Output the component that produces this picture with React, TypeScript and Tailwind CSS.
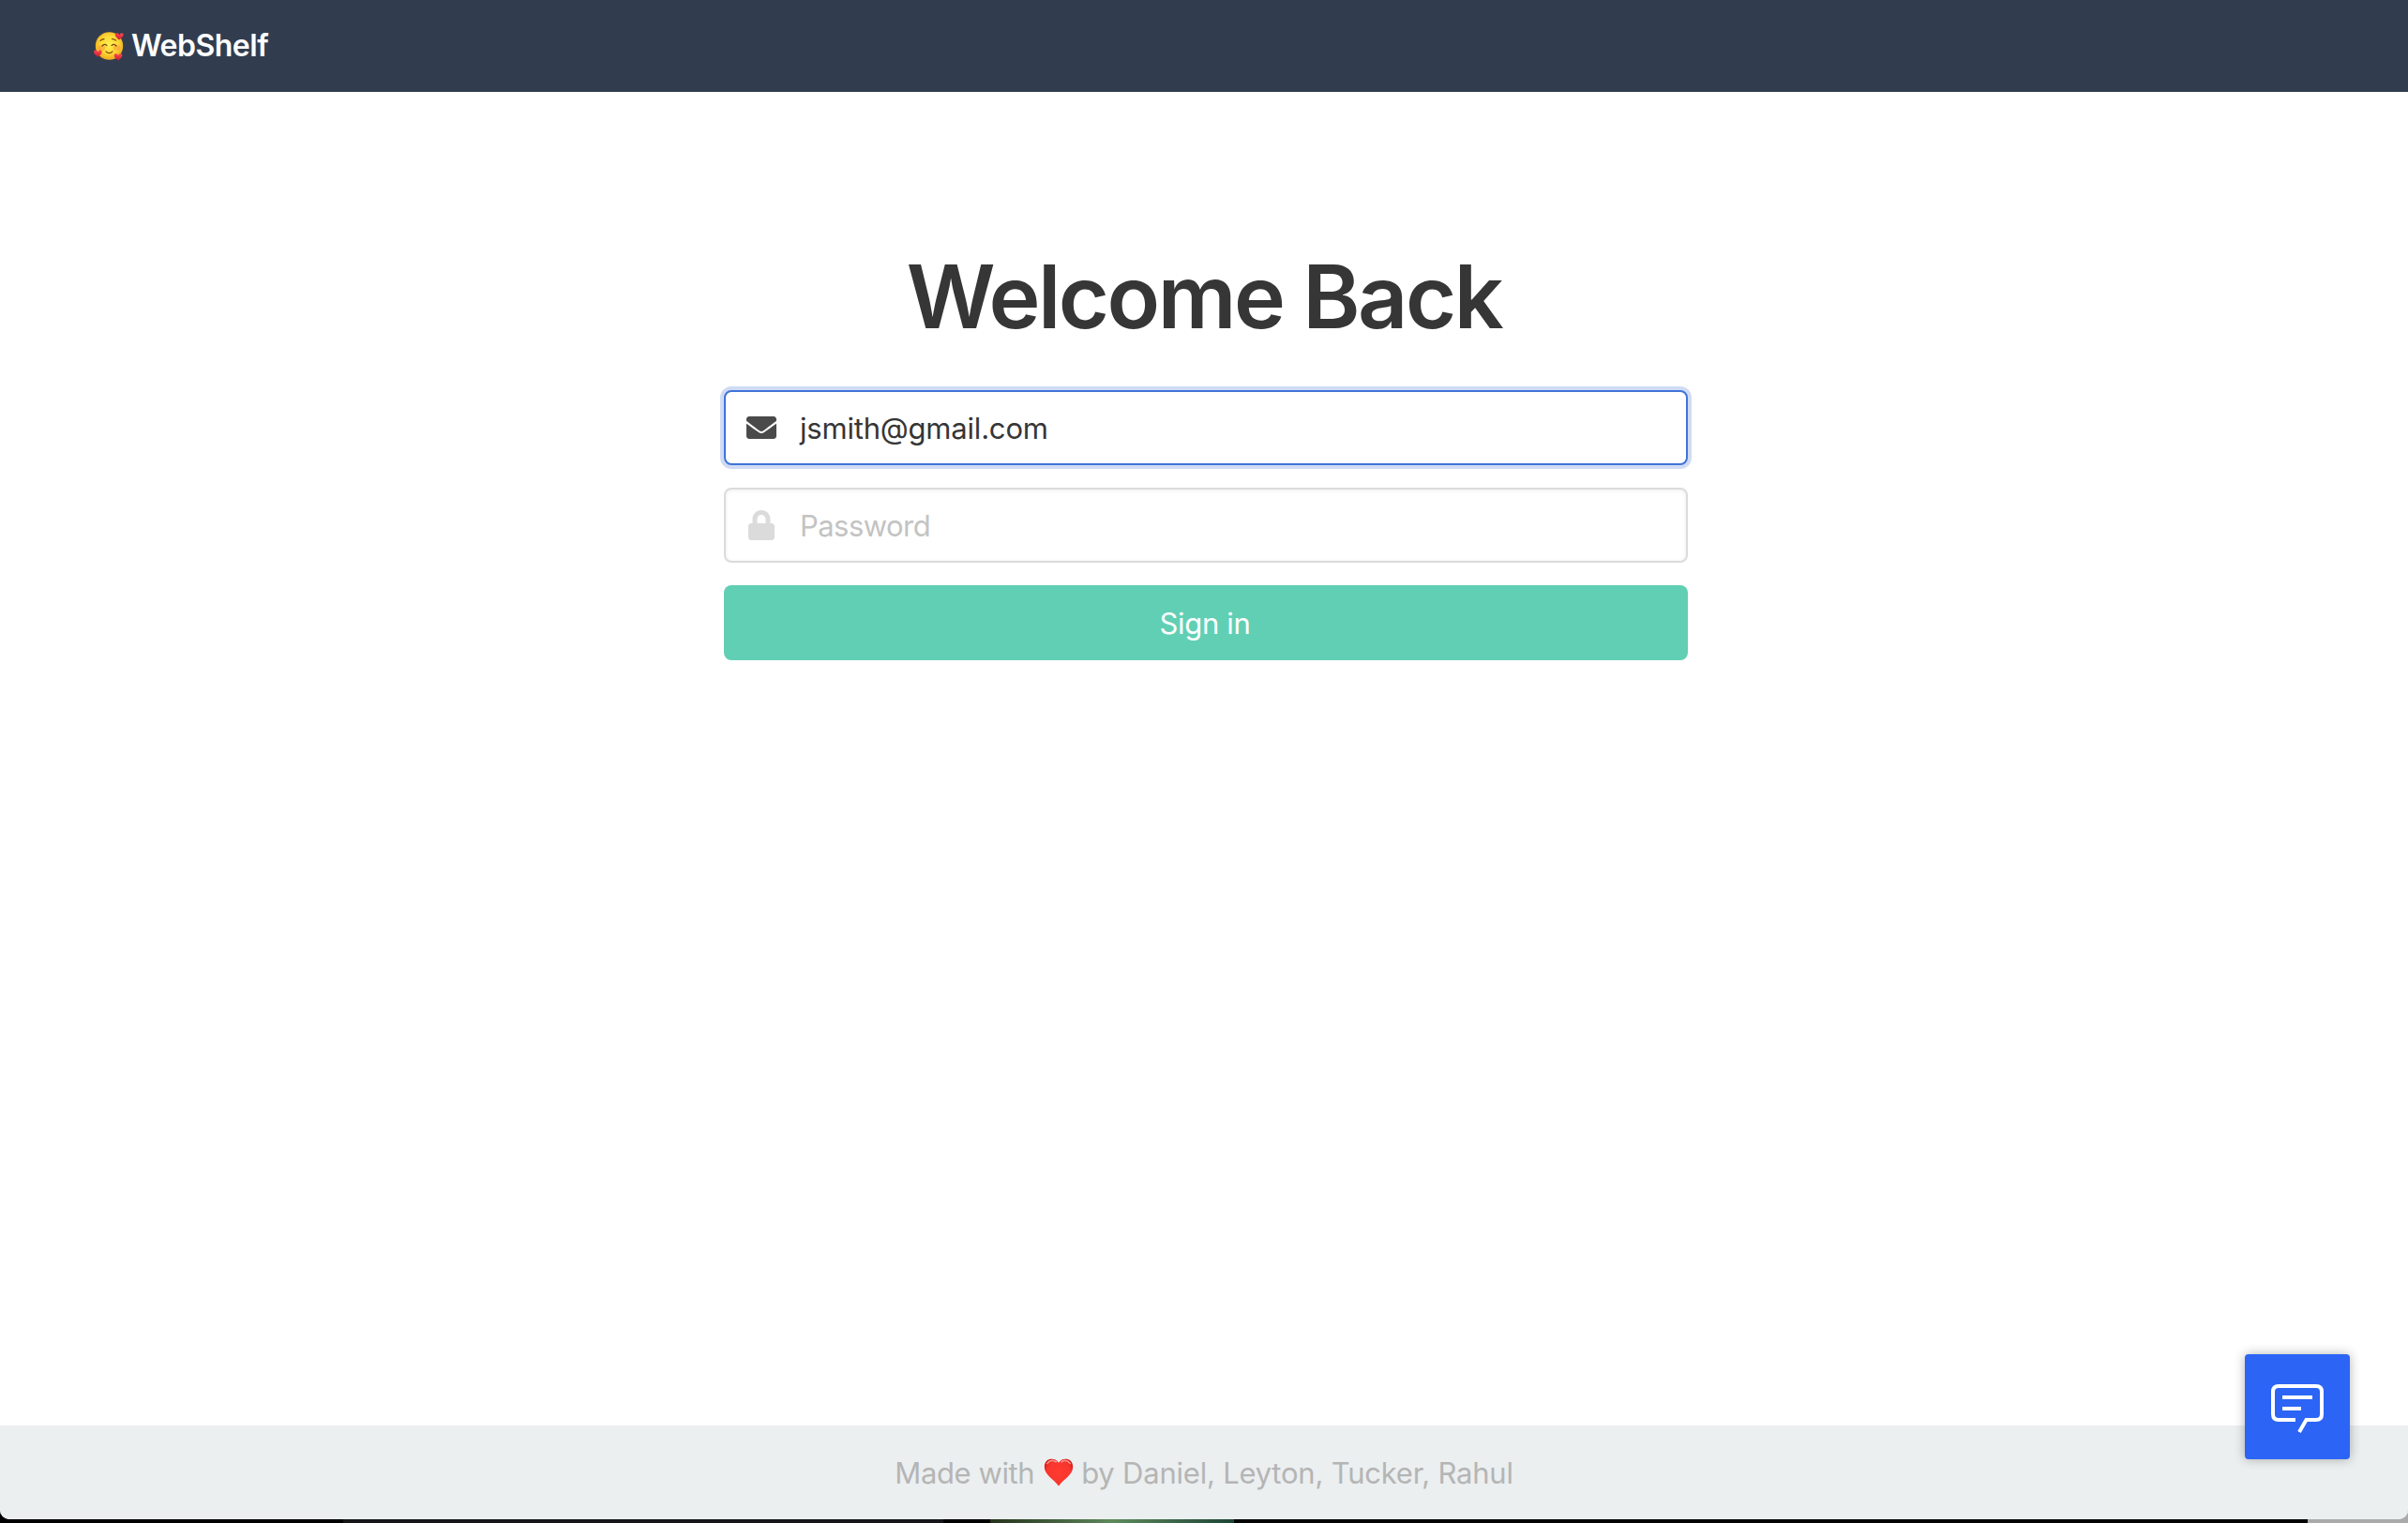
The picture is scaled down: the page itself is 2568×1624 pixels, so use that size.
import React from "react";

function LoveFace() {
  const heart = "M0 1.6C-1-1.4-5.2-.6-4.3 2.4C-3.8 4.2-1.5 5.2.6 6.6C2.2 4.8 4.4 3 4.2.8C4-1.8.8-1.8 0 1.6Z";
  return (
    <svg width="32" height="32" viewBox="0 0 32 32" className="shrink-0">
      <defs>
        <radialGradient id="skin" cx="50%" cy="45%" r="55%">
          <stop offset="0" stopColor="#fff04d" />
          <stop offset="0.6" stopColor="#fdd835" />
          <stop offset="1" stopColor="#f0a81e" />
        </radialGradient>
        <linearGradient id="petal" x1="0" y1="0" x2="0" y2="1">
          <stop offset="0" stopColor="#fb4c52" />
          <stop offset="1" stopColor="#d01b30" />
        </linearGradient>
      </defs>
      <circle cx="16.500" cy="16" r="14.700" fill="url(#skin)" />
      <ellipse cx="8.500" cy="18" rx="4" ry="3" fill="#f5793b" opacity="0.35" />
      <ellipse cx="24.500" cy="18" rx="4" ry="3" fill="#f5793b" opacity="0.35" />
      <g fill="none" stroke="#7b4514" strokeWidth="1.2" strokeLinecap="round">
        <path d="M7 10.5Q8.500 8.600 11 8.600" />
        <path d="M19.500 8.600Q22 8.600 23.500 10" />
        <path d="M9 16Q11.500 13 14 15.600" />
        <path d="M19 15.600Q21.500 13 24 16" />
        <path d="M13 21.900Q16.500 25.500 20 21.900" />
      </g>
      <path d={heart} transform="translate(27.500 3) rotate(10)" fill="url(#petal)" />
      <path d={heart} transform="translate(4.600 21) rotate(5)" fill="url(#petal)" />
      <path d={heart} transform="translate(26.200 24.800) rotate(5)" fill="url(#petal)" />
    </svg>
  );
}

function RedHeart() {
  return (
    <svg width="32" height="32" viewBox="0 0 32 32" className="shrink-0">
      <defs>
        <radialGradient id="love" cx="50%" cy="50%" r="60%">
          <stop offset="0" stopColor="#ff3b30" />
          <stop offset="0.7" stopColor="#f8362d" />
          <stop offset="1" stopColor="#cf120f" />
        </radialGradient>
      </defs>
      <path d="M16 5.800C13.500 0 .8-.8.8 10.200C.8 18.500 11 23.500 16 30.500C21 23.500 31.200 18.500 31.200 10.200C31.200-.8 18.500 0 16 5.800Z" fill="url(#love)" />
      <path d="M3.800 6.500Q8 1.300 13 4.800M19 4.800Q24 1.300 28.200 6.500" stroke="#ffb7b0" strokeWidth="1.800" strokeLinecap="round" fill="none" opacity="0.700" />
    </svg>
  );
}

export default function App() {
  return (
    <div className="relative flex h-[1624px] w-[2568px] flex-col bg-black font-['Inter',sans-serif] text-[31px] leading-[48px]">
      <div className="absolute bottom-0 left-0 flex h-3 w-full">
        <div className="w-[366px] bg-black" />
        <div className="w-[640px] bg-[#161618]" />
        <div className="w-[50px] bg-black" />
        <div className="w-[260px] bg-linear-to-r from-[#26331c] via-[#5d8a5c] to-[#1d4536]" />
        <div className="w-[1145px] bg-[#020405]" />
        <div className="flex-1 bg-[#aaaaaa]" />
      </div>
      <div className="relative flex h-[1620px] flex-col overflow-hidden rounded-b-[10px] bg-white">
        <nav className="flex h-[98px] shrink-0 items-center bg-[#313d4f] pl-[100px] text-white">
          <LoveFace />
          <span className="ml-2 text-[32px] font-[560] tracking-[-0.5px]">WebShelf</span>
        </nav>
        <main className="flex flex-1 flex-col items-center">
          <h1 className="mt-[164px] h-[108px] whitespace-nowrap text-[93px] font-semibold leading-[108px] tracking-[-2.5px] text-[#363636]">
            Welcome Back
          </h1>
          <form className="ml-1 mt-[46px] flex w-[1028px] flex-col gap-6">
            <div className="flex h-20 items-center rounded-lg border-2 border-[#3f74d8] bg-white pl-[22px] shadow-[0_0_0_4px_#d0dbf4]">
              <svg width="32" height="24" viewBox="0 0 512 384" fill="#4a4a4a" className="shrink-0">
                <path d="M502.300 126.800c3.900-3.100 9.700-.2 9.700 4.700V336c0 26.500-21.500 48-48 48H48c-26.500 0-48-21.500-48-48V131.600c0-5 5.700-7.800 9.700-4.700 22.400 17.400 52.100 39.500 154.100 113.600 21.100 15.400 56.700 47.800 92.200 47.600 35.700.3 72-32.800 92.300-47.600 102-74.100 131.600-96.300 154-113.700zM256 256c23.200.4 56.600-29.200 73.400-41.400 132.700-96.300 142.800-104.700 173.400-128.700 5.800-4.500 9.200-11.500 9.200-18.900V48c0-26.500-21.500-48-48-48H48C21.500 0 0 21.500 0 48v19c0 7.400 3.400 14.300 9.200 18.900 30.600 23.900 40.700 32.400 173.400 128.700 16.800 12.200 50.200 41.800 73.400 41.400z" />
              </svg>
              <span className="ml-[25px] pt-[2px] tracking-[-0.2px] text-[#363636]">jsmith@gmail.com</span>
            </div>
            <div className="flex h-20 items-center rounded-lg border-2 border-[#dbdbdb] bg-white pl-6 shadow-[inset_0_1px_4px_rgba(10,10,10,0.07)]">
              <svg width="28" height="32" viewBox="0 0 448 512" fill="#dbdbdb" className="shrink-0">
                <path d="M400 224h-24v-72C376 68.200 307.800 0 224 0S72 68.200 72 152v72H48c-26.500 0-48 21.500-48 48v192c0 26.500 21.500 48 48 48h352c26.500 0 48-21.500 48-48V272c0-26.500-21.500-48-48-48zm-104 0H152v-72c0-39.700 32.300-72 72-72s72 32.300 72 72v72z" />
              </svg>
              <span className="ml-[27px] pt-[2px] tracking-[-0.55px] text-[#c3c3c3]">Password</span>
            </div>
            <button type="button" className="h-20 rounded-lg bg-[#61cfb4] pr-[2px] pt-[2px] text-center tracking-[-0.3px] text-white">
              Sign in
            </button>
          </form>
        </main>
        <footer className="flex h-[100px] shrink-0 items-center justify-center bg-[#ebeff0] text-[#b5b5b5]">
          <span className="pt-[2px] tracking-[-0.4px]">Made with</span>
          <span className="ml-[10px] mr-2 flex"><RedHeart /></span>
          <span className="pt-[2px] tracking-[-0.22px]">by Daniel, Leyton, Tucker, Rahul</span>
        </footer>
        <button type="button" className="absolute left-[2394px] top-[1444px] size-28 rounded bg-[#2c64f5] shadow-[0_0_12px_rgba(0,0,0,0.3)]">
          <svg width="112" height="112" viewBox="0 0 112 112" fill="none" stroke="#fff" strokeWidth="4">
            <path d="M54 70H36Q30 70 30 64V40Q30 34 36 34H76Q82 34 82 40V64Q82 70 76 70H65.500L58 83M40 46H72M40 58H60" />
          </svg>
        </button>
      </div>
    </div>
  );
}
